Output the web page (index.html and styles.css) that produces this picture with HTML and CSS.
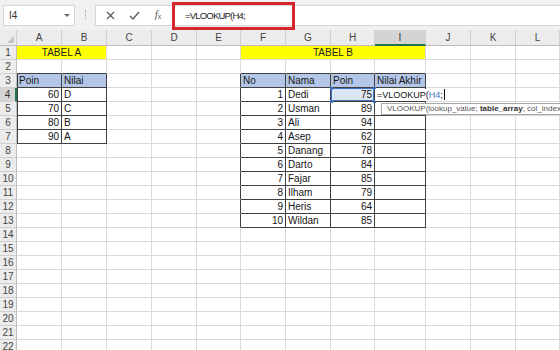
FILE: index.html
```html
<!DOCTYPE html>
<html>
<head>
<meta charset="utf-8">
<link rel="stylesheet" href="styles.css">
</head>
<body>
<div class="topbar">
  <div class="namebox"><span>I4</span><span class="dd"></span></div>
  <div class="sep"></div>
  <div class="fbox">
    <span class="ic"><svg width="9" height="9" viewBox="0 0 9 9"><path d="M1 1L8 8M8 1L1 8" stroke="#5a5a5a" stroke-width="1.2" fill="none"/></svg></span>
    <span class="ic"><svg width="11" height="9" viewBox="0 0 11 9"><path d="M1 5L4 8L10 1" stroke="#5a5a5a" stroke-width="1.3" fill="none"/></svg></span>
    <span class="ic fx"><i>f</i><sub>x</sub></span>
    <span class="formula">=VLOOKUP(H4;</span>
  </div>
  <div class="redbox"></div>
</div>
<div class="sheet">
  <div class="ch corner"><span class="tri"></span></div><div class="ch">A</div><div class="ch">B</div><div class="ch">C</div><div class="ch">D</div><div class="ch">E</div><div class="ch">F</div><div class="ch">G</div><div class="ch">H</div><div class="ch sel">I</div><div class="ch">J</div><div class="ch">K</div><div class="ch">L</div>

  <div class="rh">1</div><div class="y span2">TABEL A</div><div></div><div></div><div></div><div class="y span4">TABEL B</div><div></div><div></div><div></div>

  <div class="rh">2</div><div class="bb"></div><div class="bb"></div><div></div><div></div><div></div><div class="bb"></div><div class="bb"></div><div class="bb"></div><div class="bb"></div><div></div><div></div><div></div>

  <div class="rh">3</div><div class="t hd bl">Poin</div><div class="t hd">Nilai</div><div></div><div></div><div class="br"></div><div class="t hd">No</div><div class="t hd">Nama</div><div class="t hd">Poin</div><div class="t hd">Nilai Akhir</div><div></div><div></div><div></div>

  <div class="rh act">4</div><div class="t bl n">60</div><div class="t">D</div><div></div><div></div><div class="br"></div><div class="t n">1</div><div class="t">Dedi</div><div class="t n ref">75<span class="hdl tl"></span><span class="hdl tr"></span><span class="hdl bl2"></span><span class="hdl br2"></span></div><div class="t edit"><span class="etext">=VLOOKUP(<span class="blue">H4</span>;<span class="cursor"></span></span><div class="tip">VLOOKUP(lookup_value; <b>table_array</b>; col_index</div></div><div></div><div></div><div></div>

  <div class="rh">5</div><div class="t bl n">70</div><div class="t">C</div><div></div><div></div><div class="br"></div><div class="t n">2</div><div class="t">Usman</div><div class="t n">89</div><div class="t"></div><div></div><div></div><div></div>

  <div class="rh">6</div><div class="t bl n">80</div><div class="t">B</div><div></div><div></div><div class="br"></div><div class="t n">3</div><div class="t">Ali</div><div class="t n">94</div><div class="t"></div><div></div><div></div><div></div>

  <div class="rh">7</div><div class="t bl n">90</div><div class="t">A</div><div></div><div></div><div class="br"></div><div class="t n">4</div><div class="t">Asep</div><div class="t n">62</div><div class="t"></div><div></div><div></div><div></div>

  <div class="rh">8</div><div></div><div></div><div></div><div></div><div class="br"></div><div class="t n">5</div><div class="t">Danang</div><div class="t n">78</div><div class="t"></div><div></div><div></div><div></div>

  <div class="rh">9</div><div></div><div></div><div></div><div></div><div class="br"></div><div class="t n">6</div><div class="t">Darto</div><div class="t n">84</div><div class="t"></div><div></div><div></div><div></div>

  <div class="rh">10</div><div></div><div></div><div></div><div></div><div class="br"></div><div class="t n">7</div><div class="t">Fajar</div><div class="t n">85</div><div class="t"></div><div></div><div></div><div></div>

  <div class="rh">11</div><div></div><div></div><div></div><div></div><div class="br"></div><div class="t n">8</div><div class="t">Ilham</div><div class="t n">79</div><div class="t"></div><div></div><div></div><div></div>

  <div class="rh">12</div><div></div><div></div><div></div><div></div><div class="br"></div><div class="t n">9</div><div class="t">Heris</div><div class="t n">64</div><div class="t"></div><div></div><div></div><div></div>

  <div class="rh">13</div><div></div><div></div><div></div><div></div><div class="br"></div><div class="t n">10</div><div class="t">Wildan</div><div class="t n">85</div><div class="t"></div><div></div><div></div><div></div>

  <div class="rh">14</div><div></div><div></div><div></div><div></div><div></div><div></div><div></div><div></div><div></div><div></div><div></div><div></div>
  <div class="rh">15</div><div></div><div></div><div></div><div></div><div></div><div></div><div></div><div></div><div></div><div></div><div></div><div></div>
  <div class="rh">16</div><div></div><div></div><div></div><div></div><div></div><div></div><div></div><div></div><div></div><div></div><div></div><div></div>
  <div class="rh">17</div><div></div><div></div><div></div><div></div><div></div><div></div><div></div><div></div><div></div><div></div><div></div><div></div>
  <div class="rh">18</div><div></div><div></div><div></div><div></div><div></div><div></div><div></div><div></div><div></div><div></div><div></div><div></div>
  <div class="rh">19</div><div></div><div></div><div></div><div></div><div></div><div></div><div></div><div></div><div></div><div></div><div></div><div></div>
  <div class="rh">20</div><div></div><div></div><div></div><div></div><div></div><div></div><div></div><div></div><div></div><div></div><div></div><div></div>
  <div class="rh">21</div><div></div><div></div><div></div><div></div><div></div><div></div><div></div><div></div><div></div><div></div><div></div><div></div>
  <div class="rh">22</div><div></div><div></div><div></div><div></div><div></div><div></div><div></div><div></div><div></div><div></div><div></div><div></div>
</div>
</body>
</html>
```

FILE: styles.css
```css
html, body {
  margin: 0;
  padding: 0;
  width: 560px;
  height: 350px;
  overflow: hidden;
  background: #ffffff;
  font-family: "Liberation Sans", Arial, sans-serif;
}

.topbar {
  position: relative;
  height: 30px;
  background: #f1f1f1;
  display: flex;
  align-items: center;
  padding-left: 3px;
  box-sizing: border-box;
}

.namebox {
  width: 72px;
  height: 21px;
  box-sizing: border-box;
  background: #fff;
  border: 1px solid #d6d6d6;
  display: flex;
  align-items: center;
  justify-content: space-between;
  padding: 0 4px 0 5px;
  font-size: 10px;
  color: #333;
}

.dd {
  width: 0;
  height: 0;
  border-left: 3px solid transparent;
  border-right: 3px solid transparent;
  border-top: 3px solid #6a6a6a;
}

.sep {
  width: 20px;
  height: 10px;
  display: flex;
  justify-content: center;
}
.sep::before {
  content: "";
  width: 0;
  height: 10px;
  border-left: 1px dotted #a8a8a8;
}

.fbox {
  flex: 1;
  height: 21px;
  box-sizing: border-box;
  background: #fff;
  border: 1px solid #d6d6d6;
  border-right: none;
  display: flex;
  align-items: center;
  padding-left: 2px;
}

.ic {
  width: 24px;
  height: 19px;
  display: flex;
  align-items: center;
  justify-content: center;
  color: #5a5a5a;
}

.fx {
  font-family: "Liberation Serif", serif;
  font-size: 11px;
  align-items: baseline;
  padding-top: 2px;
  box-sizing: border-box;
}
.fx sub {
  font-size: 7px;
  font-family: "Liberation Sans", sans-serif;
  vertical-align: baseline;
  position: relative;
  top: 1px;
}

.formula {
  padding-left: 15px;
  font-size: 9.5px;
  letter-spacing: -0.8px;
  color: #222;
}

.redbox {
  position: absolute;
  left: 172px;
  top: 2px;
  width: 123px;
  height: 28px;
  box-sizing: border-box;
  border: 3px solid #d62430;
}

.sheet {
  display: grid;
  grid-template-columns: 17px 45px 45px 45px 45px 44px 45px 45px 44px 51px 45px 45px 44px;
  grid-template-rows: 16px;
  grid-auto-rows: 14px;
}

.sheet > div {
  box-sizing: border-box;
  border-right: 1px solid #dadada;
  border-bottom: 1px solid #dadada;
  font-size: 10px;
  line-height: 13px;
  padding: 0 2px;
  white-space: nowrap;
  overflow: hidden;
  color: #151515;
}

.sheet > .ch {
  background: #ececec;
  border-right-color: #d0d0d0;
  border-bottom-color: #bdbdbd;
  text-align: center;
  color: #444;
  line-height: 15px;
}

.sheet > .ch.sel {
  background: #d4d4d4;
  border-bottom: 2px solid #217346;
  color: #333;
}

.corner {
  position: relative;
}
.tri {
  position: absolute;
  right: 2px;
  bottom: 2px;
  width: 0;
  height: 0;
  border-left: 7px solid transparent;
  border-bottom: 7px solid #c4c4c4;
}

.sheet > .rh {
  background: #ececec;
  border-right-color: #bdbdbd;
  border-bottom-color: #d0d0d0;
  text-align: center;
  color: #444;
  padding: 0;
}

.sheet > .rh.act {
  background: #d4d4d4;
  border-right: 2px solid #217346;
  color: #333;
}

.span2 { grid-column: span 2; }
.span4 { grid-column: span 4; }

.sheet > .y {
  background: #ffff00;
  text-align: center;
  color: #222;
}

.sheet > .hd {
  background: #b4c6e7;
}

.sheet > .t {
  border-right-color: #404040;
  border-bottom-color: #404040;
}
.sheet > .bb { border-bottom-color: #404040; }
.sheet > .br { border-right-color: #404040; }
.sheet > .bl { box-shadow: inset 1px 0 0 #404040; }

.n { text-align: right; }

.sheet > .ref {
  position: relative;
  overflow: visible;
  background: #dce5f4;
  box-shadow: inset 0 0 0 1px #4472c4;
}
.hdl {
  position: absolute;
  width: 3px;
  height: 3px;
  background: #4472c4;
}
.hdl.tl { left: -1px; top: -1px; }
.hdl.tr { right: -2px; top: -1px; }
.hdl.bl2 { left: -1px; bottom: -2px; }
.hdl.br2 { right: -2px; bottom: -2px; }

.sheet > .edit {
  position: relative;
  overflow: visible;
  padding: 0;
  z-index: 2;
}

.etext {
  display: inline-block;
  height: 12px;
  background: #fff;
  padding: 0 2px 0 2px;
  font-size: 9px;
  line-height: 12px;
  color: #111;
  position: relative;
  z-index: 2;
}
.blue { color: #3d6fc4; }
.cursor {
  display: inline-block;
  width: 1px;
  height: 11px;
  background: #111;
  vertical-align: -2px;
  margin-left: 1px;
}

.tip {
  position: absolute;
  left: 6px;
  top: 15px;
  width: 182px;
  height: 12px;
  box-sizing: border-box;
  padding: 0 0 0 5px;
  background: #fff;
  border: 1px solid #a9a9a9;
  border-right: none;
  font-size: 8px;
  line-height: 10px;
  color: #555;
  white-space: nowrap;
  overflow: hidden;
  z-index: 3;
}
.tip b {
  color: #333;
}
```
